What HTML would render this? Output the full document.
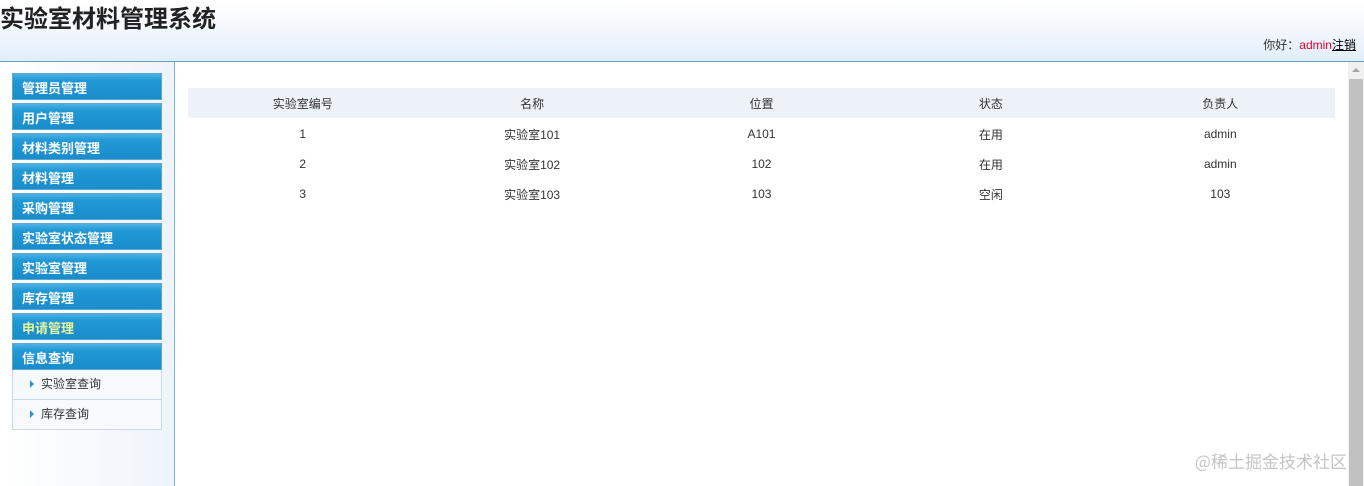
<!DOCTYPE html>
<html><head><meta charset="utf-8"><style>
*{margin:0;padding:0;box-sizing:border-box}
body{width:1364px;height:486px;overflow:hidden;background:#fff;font-family:"Liberation Sans","Noto Sans CJK SC",sans-serif;font-size:12px;color:#333;position:relative}
.hd{position:absolute;left:0;top:0;width:1364px;height:62px;background:linear-gradient(#fff 0%,#f6f9fd 40%,#e2eefa 100%);border-bottom:1px solid #5fa4c8}
.hd h1{position:absolute;left:0;top:2px;font-size:24px;font-weight:bold;color:#222;font-family:"Noto Sans CJK SC",sans-serif;line-height:30px}
.hd .u{position:absolute;right:8px;top:36px;font-size:12px;color:#333}
.hd .u .a{color:#e4002b}.hd .u .l{color:#000;text-decoration:underline}
.sb{position:absolute;left:0;top:62px;width:175px;height:424px;background:linear-gradient(90deg,#fff,#eef4fb);border-right:1px solid #7ab6d4}
.m{position:absolute;left:12px;width:150px;height:27px;background:linear-gradient(#4db1e4 0%,#2199d6 25%,#1a8ccc 100%);border:1px solid #5aa8d2;color:#fff;font-weight:bold;font-size:13px;line-height:28px;padding-left:9px;font-family:"Noto Sans CJK SC",sans-serif}
.m.y{color:#e8f59a}
.s{position:absolute;left:12px;width:150px;height:30px;background:#f7fafd;border:1px solid #cdd9e3;border-top:none;line-height:29px;padding-left:28px;font-size:12px;color:#333}
.s:before{content:"";position:absolute;left:17px;top:10px;border-left:4px solid #3a8fc8;border-top:4px solid transparent;border-bottom:4px solid transparent}
table{position:absolute;left:188px;top:88px;width:1147px;border-collapse:collapse}
td,th{height:30px;text-align:center;font-weight:normal;width:20%;vertical-align:middle}
th{background:#edf1f8;height:30px}
td{padding-top:2px}
.sc{position:absolute;left:1348px;top:62px;width:16px;height:424px;background:#f0f0f0}
.sc .t{position:absolute;left:1px;top:17px;width:14px;height:407px;background:#c1c1c1}
.sc .ar{position:absolute;left:4px;top:6px;border-bottom:4px solid #a3a3a3;border-left:4px solid transparent;border-right:4px solid transparent}
.wm{position:absolute;right:17px;top:448px;font-size:17px;color:#c4c4c4;font-family:"Noto Sans CJK SC",sans-serif}
</style></head><body>
<div class="hd"><h1>实验室材料管理系统</h1><div class="u">你好：<span class="a">admin</span><span class="l">注销</span></div></div>
<div class="sb"></div>
<div class="m" style="top:73px">管理员管理</div>
<div class="m" style="top:103px">用户管理</div>
<div class="m" style="top:133px">材料类别管理</div>
<div class="m" style="top:163px">材料管理</div>
<div class="m" style="top:193px">采购管理</div>
<div class="m" style="top:223px">实验室状态管理</div>
<div class="m" style="top:253px">实验室管理</div>
<div class="m" style="top:283px">库存管理</div>
<div class="m y" style="top:313px">申请管理</div>
<div class="m" style="top:343px">信息查询</div>
<div class="s" style="top:370px">实验室查询</div>
<div class="s" style="top:400px">库存查询</div>
<table>
<tr><th>实验室编号</th><th>名称</th><th>位置</th><th>状态</th><th>负责人</th></tr>
<tr><td>1</td><td>实验室101</td><td>A101</td><td>在用</td><td>admin</td></tr>
<tr><td>2</td><td>实验室102</td><td>102</td><td>在用</td><td>admin</td></tr>
<tr><td>3</td><td>实验室103</td><td>103</td><td>空闲</td><td>103</td></tr>
</table>
<div class="sc"><div class="ar"></div><div class="t"></div></div>
<div class="wm">@稀土掘金技术社区</div>
</body></html>
